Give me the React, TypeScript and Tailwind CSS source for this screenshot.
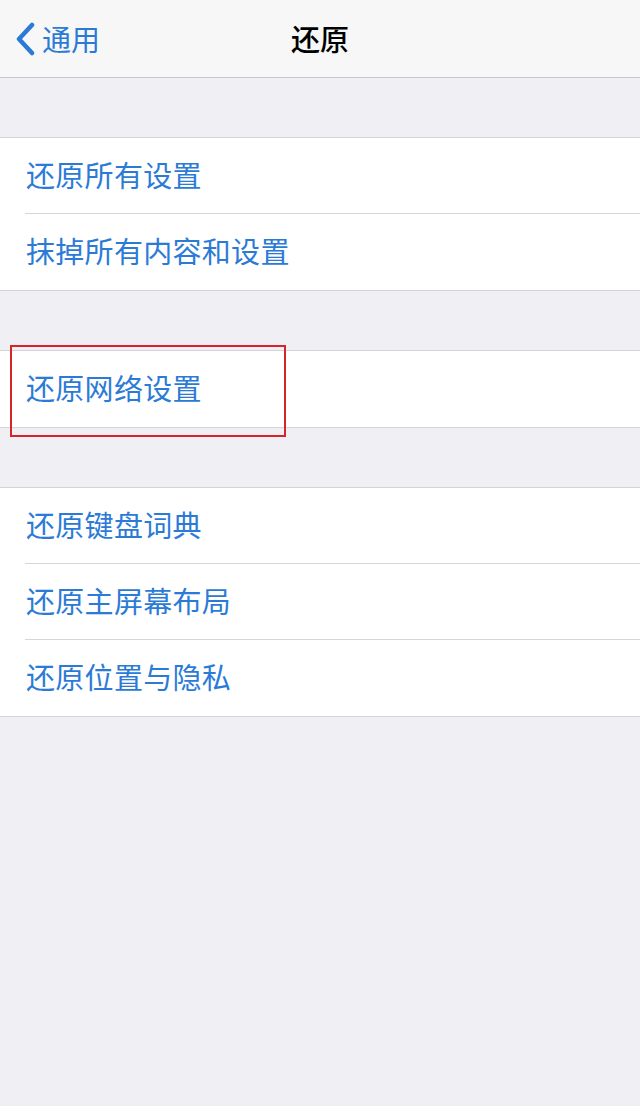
import React from "react";

const font = { fontFamily: '"Noto Sans CJK SC", "Noto Sans", sans-serif' };

function Row({ label, last }: { label: string; last?: boolean }) {
  return (
    <div className="relative h-[76px] flex items-center pl-[26px] pb-[4px]">
      <span className="text-[29px] leading-none text-[#2b7bd6] tracking-[0.3px]">{label}</span>
      {!last && <div className="absolute bottom-0 left-[25px] right-0 h-px bg-[#d6d6da]" />}
    </div>
  );
}

function Group({ items, children }: { items: string[]; children?: React.ReactNode }) {
  return (
    <div className="relative bg-white border-y border-[#d3d3d8]">
      {items.map((it, i) => (
        <Row key={it} label={it} last={i === items.length - 1} />
      ))}
      {children}
    </div>
  );
}

export default function App() {
  return (
    <div className="w-[640px] h-[1106px] bg-[#efeff4] overflow-hidden" style={font}>
      {/* NAV BAR */}
      <div className="relative h-[78px] bg-[#f7f7f7] border-b border-[#c8c8cc] flex items-center justify-center">
        <div className="absolute left-[14px] top-0 h-full flex items-center gap-[6px]">
          <svg width="22" height="34" viewBox="0 0 22 34" fill="none">
            <path d="M18 3 L5 17 L18 31" stroke="#2b7bd6" strokeWidth="4.5" strokeLinecap="round" strokeLinejoin="round" />
          </svg>
          <span className="text-[29px] leading-none text-[#2b7bd6]">通用</span>
        </div>
        <span className="text-[29px] leading-none font-medium text-black">还原</span>
      </div>

      <div className="h-[59px]" />
      <Group items={["还原所有设置", "抹掉所有内容和设置"]} />

      <div className="h-[59px]" />
      <Group items={["还原网络设置"]}>
        <div className="absolute left-[10px] top-[-6px] w-[276px] h-[92px] border-2 border-[#d9232b]" />
      </Group>

      <div className="h-[59px]" />
      <Group items={["还原键盘词典", "还原主屏幕布局", "还原位置与隐私"]} />
    </div>
  );
}
